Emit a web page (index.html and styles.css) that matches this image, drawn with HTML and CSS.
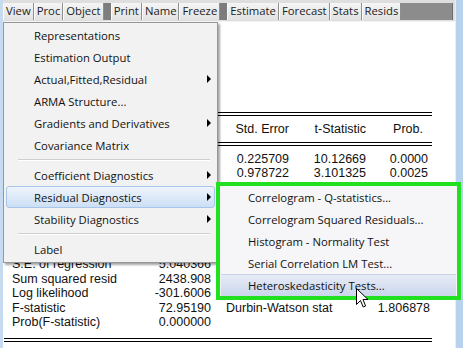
FILE: index.html
```html
<!DOCTYPE html>
<html>
<head>
<meta charset="utf-8">
<link rel="stylesheet" href="styles.css">
</head>
<body>
<div class="window">
  <div class="main">
    <div class="toolbar">
      <span class="tb-btn">View</span><span class="tb-btn">Proc</span><span class="tb-btn">Object</span>
      <span class="tb-sep"></span>
      <span class="tb-btn">Print</span><span class="tb-btn">Name</span><span class="tb-btn">Freeze</span>
      <span class="tb-sep"></span>
      <span class="tb-btn">Estimate</span><span class="tb-btn">Forecast</span><span class="tb-btn">Stats</span><span class="tb-btn">Resids</span>
      <span class="tb-fill"></span>
    </div>
    <div class="content">
      <div class="dline"></div>
      <div class="coef-grid coef-head">
        <span></span><span></span><span>Std. Error</span><span>t-Statistic</span><span class="prob-h">Prob.</span>
      </div>
      <div class="dline"></div>
      <div class="coef-grid coef-rows">
        <span></span><span></span><span>0.225709</span><span>10.12669</span><span>0.0000</span>
        <span></span><span></span><span>0.978722</span><span>3.101325</span><span>0.0025</span>
      </div>
      <div class="stats">
        <span>S.E. of regression</span><span class="num">5.040366</span><span></span><span></span>
        <span>Sum squared resid</span><span class="num">2438.908</span><span></span><span></span>
        <span>Log likelihood</span><span class="num">-301.6006</span><span></span><span></span>
        <span>F-statistic</span><span class="num">72.95190</span><span>Durbin-Watson stat</span><span class="num">1.806878</span>
        <span>Prob(F-statistic)</span><span class="num">0.000000</span><span></span><span></span>
      </div>
      <div class="dline"></div>
    </div>
  </div>
  <div class="scrollbar"></div>
</div>

<div class="menu">
  <div class="item">Representations</div>
  <div class="item">Estimation Output</div>
  <div class="item sub">Actual,Fitted,Residual</div>
  <div class="item">ARMA Structure...</div>
  <div class="item sub">Gradients and Derivatives</div>
  <div class="item">Covariance Matrix</div>
  <div class="sep"></div>
  <div class="item sub">Coefficient Diagnostics</div>
  <div class="item sub active">Residual Diagnostics</div>
  <div class="item sub">Stability Diagnostics</div>
  <div class="sep"></div>
  <div class="item">Label</div>
</div>

<div class="submenu">
  <div class="item">Correlogram - Q-statistics...</div>
  <div class="item">Correlogram Squared Residuals...</div>
  <div class="item">Histogram - Normality Test</div>
  <div class="item">Serial Correlation LM Test...</div>
  <div class="item hover">Heteroskedasticity Tests...</div>
</div>

<svg class="cursor" width="13" height="21" viewBox="0 0 13 21">
  <path d="M0.5 0.5 L0.5 16.5 L4.5 12.5 L7.2 19 L9.6 18 L7 11.5 L12 11.5 Z" fill="#fff" stroke="#000" stroke-width="1" stroke-linejoin="miter"/>
</svg>
</body>
</html>
```

FILE: styles.css
```css
html, body {
  margin: 0;
  padding: 0;
}
body {
  width: 463px;
  height: 348px;
  overflow: hidden;
  background: #c6daf0;
  position: relative;
  font-family: "Liberation Sans", Arial, sans-serif;
}
.window {
  display: flex;
  height: 348px;
  padding-left: 3px;
  box-sizing: border-box;
}
.main {
  width: 452px;
  display: flex;
  flex-direction: column;
  background: #fff;
}
.toolbar {
  display: flex;
  height: 22px;
  box-sizing: border-box;
  padding-top: 3px;
  padding-bottom: 1px;
  background: #dedede;
  border-bottom: 1px solid #f2f2f2;
  font-family: "Open Sans", "Noto Sans", sans-serif;
  font-size: 11.3px;
  color: #1c1c1c;
}
.tb-btn {
  display: flex;
  align-items: center;
  padding: 0 2px 1px;
  background: linear-gradient(#f5f5f5, #e2e2e2);
  border-right: 1px solid #8e8e8e;
  border-left: 1px solid #fbfbfb;
  line-height: 1;
}
.tb-sep {
  width: 7px;
  background: #7d7d7d;
}
.tb-fill {
  flex: 1;
  background: #8c8c8c;
  border-right: 1px solid #6e6e6e;
  margin-right: 2px;
}
.content {
  flex: 1;
  padding-top: 90px;
  font-size: 12.5px;
  color: #111;
}
.dline {
  height: 4px;
  box-sizing: border-box;
  border-top: 1px solid #000;
  border-bottom: 1px solid #000;
  margin: 0 23px 0 1px;
}
.coef-grid {
  display: grid;
  grid-template-columns: 128px 71px 78px 77px 62px;
  margin-left: 9px;
  text-align: right;
}
.coef-head {
  height: 26px;
  align-items: center;
}
.coef-head .prob-h {
  padding-right: 5px;
}
.coef-rows {
  padding-top: 6px;
  line-height: 14px;
}
.stats {
  display: grid;
  grid-template-columns: 128px 71px 15px 134px 70px;
  margin-left: 9px;
  margin-top: 77px;
  line-height: 14.5px;
}
.stats span:nth-child(4n+3) {
  grid-column: 4;
}
.stats .num {
  text-align: right;
}
.stats + .dline {
  margin-top: 8px;
}
.scrollbar {
  width: 8px;
  background: #b8d1ec;
  border-left: 1px solid #e6eef8;
  box-sizing: border-box;
}
.menu {
  position: absolute;
  left: 3px;
  top: 22px;
  width: 215px;
  box-sizing: border-box;
  padding: 1px 0 2px;
  background: #f2f2f2;
  border: 1px solid #979797;
  box-shadow: 2px 2px 2px rgba(0, 0, 0, 0.35);
  font-family: "Open Sans", "Noto Sans", sans-serif;
  font-size: 11.3px;
  color: #111;
}
.menu .item {
  height: 22px;
  margin: 0 2px;
  padding: 0 3px 0 27px;
  display: flex;
  align-items: center;
  justify-content: space-between;
  box-sizing: border-box;
  border: 1px solid transparent;
}
.menu .item.sub::after {
  content: "";
  border-left: 4px solid #000;
  border-top: 4px solid transparent;
  border-bottom: 4px solid transparent;
}
.menu .item.active {
  background: linear-gradient(#eef4fc, #cddff5);
  border-color: #a9c6ea;
  border-radius: 3px;
}
.menu .sep {
  height: 8px;
  display: flex;
  flex-direction: column;
  justify-content: center;
  margin: 0 7px 0 14px;
}
.menu .sep::before {
  content: "";
  border-top: 1px solid #cfcfcf;
  border-bottom: 1px solid #fff;
}
.submenu {
  position: absolute;
  left: 216px;
  top: 182px;
  width: 245px;
  box-sizing: border-box;
  border: 4px solid #20e020;
  background: #f6f5f8;
  font-family: "Open Sans", "Noto Sans", sans-serif;
  font-size: 11.3px;
  color: #111;
}
.submenu .item {
  height: 22px;
  display: flex;
  align-items: center;
  padding-left: 27px;
  margin: 0 1px;
}
.submenu .item.hover {
  background: linear-gradient(#e6ebf6, #cbd6ec);
  border-top: 1px solid #c9d3e6;
  box-sizing: border-box;
}
.cursor {
  position: absolute;
  left: 356px;
  top: 288px;
}
```
